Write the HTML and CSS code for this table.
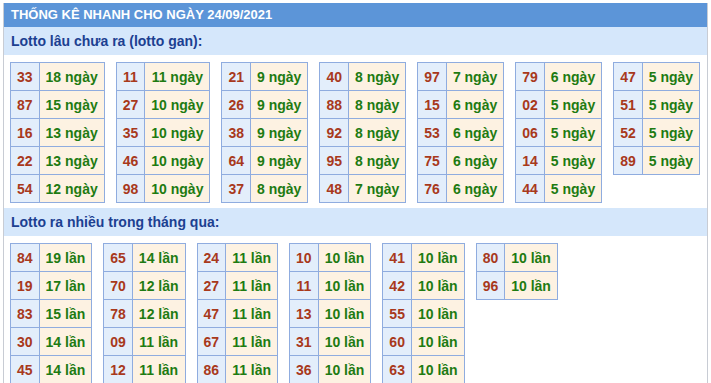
FILE: index.html
```html
<!DOCTYPE html>
<html>
<head>
<meta charset="utf-8">
<link rel="stylesheet" href="styles.css">
</head>
<body>
<div class="box">
  <div class="title">THỐNG KÊ NHANH CHO NGÀY 24/09/2021</div>
  <div class="sub">Lotto lâu chưa ra (lotto gan):</div>
  <div class="grid g1">
    <table><tr><td class="n">33</td><td class="v">18 ngày</td></tr><tr><td class="n">87</td><td class="v">15 ngày</td></tr><tr><td class="n">16</td><td class="v">13 ngày</td></tr><tr><td class="n">22</td><td class="v">13 ngày</td></tr><tr><td class="n">54</td><td class="v">12 ngày</td></tr></table>
    <table><tr><td class="n">11</td><td class="v">11 ngày</td></tr><tr><td class="n">27</td><td class="v">10 ngày</td></tr><tr><td class="n">35</td><td class="v">10 ngày</td></tr><tr><td class="n">46</td><td class="v">10 ngày</td></tr><tr><td class="n">98</td><td class="v">10 ngày</td></tr></table>
    <table><tr><td class="n">21</td><td class="v">9 ngày</td></tr><tr><td class="n">26</td><td class="v">9 ngày</td></tr><tr><td class="n">38</td><td class="v">9 ngày</td></tr><tr><td class="n">64</td><td class="v">9 ngày</td></tr><tr><td class="n">37</td><td class="v">8 ngày</td></tr></table>
    <table><tr><td class="n">40</td><td class="v">8 ngày</td></tr><tr><td class="n">88</td><td class="v">8 ngày</td></tr><tr><td class="n">92</td><td class="v">8 ngày</td></tr><tr><td class="n">95</td><td class="v">8 ngày</td></tr><tr><td class="n">48</td><td class="v">7 ngày</td></tr></table>
    <table><tr><td class="n">97</td><td class="v">7 ngày</td></tr><tr><td class="n">15</td><td class="v">6 ngày</td></tr><tr><td class="n">53</td><td class="v">6 ngày</td></tr><tr><td class="n">75</td><td class="v">6 ngày</td></tr><tr><td class="n">76</td><td class="v">6 ngày</td></tr></table>
    <table><tr><td class="n">79</td><td class="v">6 ngày</td></tr><tr><td class="n">02</td><td class="v">5 ngày</td></tr><tr><td class="n">06</td><td class="v">5 ngày</td></tr><tr><td class="n">14</td><td class="v">5 ngày</td></tr><tr><td class="n">44</td><td class="v">5 ngày</td></tr></table>
    <table><tr><td class="n">47</td><td class="v">5 ngày</td></tr><tr><td class="n">51</td><td class="v">5 ngày</td></tr><tr><td class="n">52</td><td class="v">5 ngày</td></tr><tr><td class="n">89</td><td class="v">5 ngày</td></tr></table>
  </div>
  <div class="sub">Lotto ra nhiều trong tháng qua:</div>
  <div class="grid g2">
    <table><tr><td class="n">84</td><td class="v">19 lần</td></tr><tr><td class="n">19</td><td class="v">17 lần</td></tr><tr><td class="n">83</td><td class="v">15 lần</td></tr><tr><td class="n">30</td><td class="v">14 lần</td></tr><tr><td class="n">45</td><td class="v">14 lần</td></tr></table>
    <table><tr><td class="n">65</td><td class="v">14 lần</td></tr><tr><td class="n">70</td><td class="v">12 lần</td></tr><tr><td class="n">78</td><td class="v">12 lần</td></tr><tr><td class="n">09</td><td class="v">11 lần</td></tr><tr><td class="n">12</td><td class="v">11 lần</td></tr></table>
    <table><tr><td class="n">24</td><td class="v">11 lần</td></tr><tr><td class="n">27</td><td class="v">11 lần</td></tr><tr><td class="n">47</td><td class="v">11 lần</td></tr><tr><td class="n">67</td><td class="v">11 lần</td></tr><tr><td class="n">86</td><td class="v">11 lần</td></tr></table>
    <table><tr><td class="n">10</td><td class="v">10 lần</td></tr><tr><td class="n">11</td><td class="v">10 lần</td></tr><tr><td class="n">13</td><td class="v">10 lần</td></tr><tr><td class="n">31</td><td class="v">10 lần</td></tr><tr><td class="n">36</td><td class="v">10 lần</td></tr></table>
    <table><tr><td class="n">41</td><td class="v">10 lần</td></tr><tr><td class="n">42</td><td class="v">10 lần</td></tr><tr><td class="n">55</td><td class="v">10 lần</td></tr><tr><td class="n">60</td><td class="v">10 lần</td></tr><tr><td class="n">63</td><td class="v">10 lần</td></tr></table>
    <table><tr><td class="n">80</td><td class="v">10 lần</td></tr><tr><td class="n">96</td><td class="v">10 lần</td></tr></table>
  </div>
</div>
</body>
</html>
```

FILE: styles.css
```css
html, body {
  margin: 0;
  padding: 0;
  background: #ffffff;
}
body {
  padding: 3px 3px 0 3px;
  font-family: "Liberation Sans", Arial, sans-serif;
  font-weight: bold;
}
.box {
  width: 703px;
  border: 1px solid #c8ccd4;
  border-top: none;
}
.title {
  background: #5c95d8;
  color: #ffffff;
  font-size: 13px;
  height: 24px;
  line-height: 24px;
  padding-left: 7px;
}
.sub {
  background: #d5e7fb;
  color: #1c4091;
  font-size: 14px;
  height: 28px;
  line-height: 28px;
  padding-left: 7px;
}
.grid {
  display: flex;
  align-items: flex-start;
  gap: 11px;
  padding: 7px 0 5px 6px;
}
table {
  border-collapse: collapse;
  font-size: 14px;
}
td {
  border: 1px solid #8facdf;
  height: 27px;
  padding: 0;
  text-align: center;
}
td.n {
  background: #e3eefb;
  color: #a8391c;
  padding: 0 6px;
}
td.v {
  background: #fdf2e2;
  color: #1e7b12;
  padding: 0 6px;
}
```
